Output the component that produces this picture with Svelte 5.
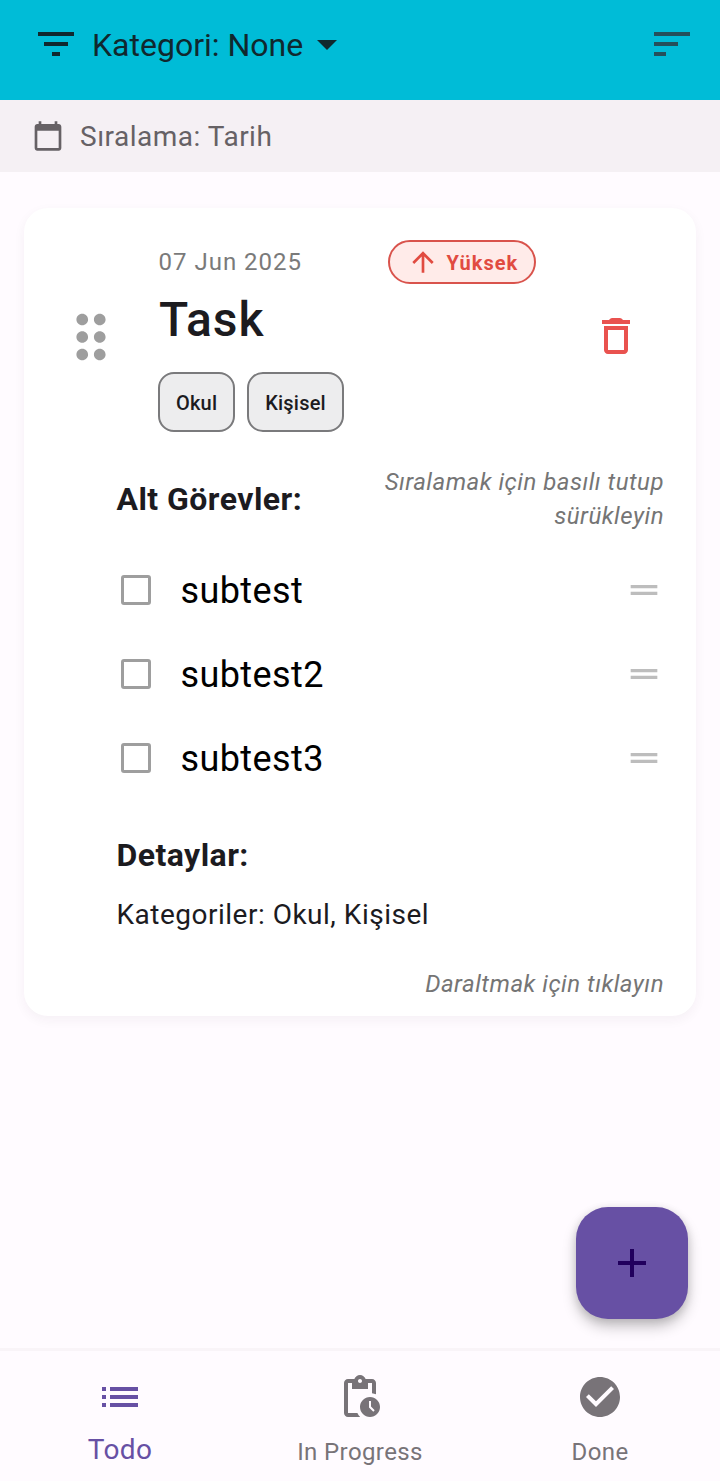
<script>
  const chips = ['Okul', 'Kişisel'];
  const subtasks = ['subtest', 'subtest2', 'subtest3'];
  const icons = {
    filter: 'M10 18h4v-2h-4v2zM3 6v2h18V6H3zm3 7h12v-2H6v2z',
    drop: 'M7 10l5 5 5-5z',
    sort: 'M3 18h6v-2H3v2zM3 6v2h18V6H3zm0 7h12v-2H3v2z',
    calendar: 'M20 3h-1V1h-2v2H7V1H5v2H4c-1.1 0-2 .9-2 2v16c0 1.1.9 2 2 2h16c1.1 0 2-.9 2-2V5c0-1.1-.9-2-2-2zm0 18H4V8h16v13z',
    drag: 'M11 18c0 1.1-.9 2-2 2s-2-.9-2-2 .9-2 2-2 2 .9 2 2zm-2-8c-1.1 0-2 .9-2 2s.9 2 2 2 2-.9 2-2-.9-2-2-2zm0-6c-1.1 0-2 .9-2 2s.9 2 2 2 2-.9 2-2-.9-2-2-2zm6 4c1.1 0 2-.9 2-2s-.9-2-2-2-2 .9-2 2 .9 2 2 2zm0 2c-1.1 0-2 .9-2 2s.9 2 2 2 2-.9 2-2-.9-2-2-2zm0 6c-1.1 0-2 .9-2 2s.9 2 2 2 2-.9 2-2-.9-2-2-2z',
    up: 'M4 12l1.41 1.41L11 7.83V20h2V7.83l5.58 5.59L20 12l-8-8-8 8z',
    trash: 'M6 19c0 1.1.9 2 2 2h8c1.1 0 2-.9 2-2V7H6V19zM8 9h8v10H8V9zM15.5 4l-.6-.6c-.3-.3-.6-.4-1-.4h-3.8c-.4 0-.7.1-1 .4L8.5 4H5v2h14V4z',
    handle: 'M20 9H4v2h16V9zM4 15h16v-2H4v2z',
    plus: 'M19 13h-6v6h-2v-6H5v-2h6V5h2v6h6v2z',
    list: 'M3 13h2v-2H3v2zm0 4h2v-2H3v2zm0-8h2V7H3v2zm4 4h14v-2H7v2zm0 4h14v-2H7v2zM7 7v2h14V7H7z',
    pending: 'M17 12c-2.76 0-5 2.24-5 5s2.24 5 5 5 5-2.24 5-5-2.24-5-5-5zm1.65 7.35L16.5 17.2V14h1v2.79l1.85 1.85-.7.71zM18 3h-3.18C14.4 1.84 13.3 1 12 1s-2.4.84-2.82 2H6c-1.1 0-2 .9-2 2v15c0 1.1.9 2 2 2h6.11c-.59-.57-1.07-1.25-1.42-2H6V5h2v3h8V5h2v5.08c.71.1 1.38.31 2 .6V5c0-1.1-.9-2-2-2zm-6 2c-.55 0-1-.45-1-1s.45-1 1-1 1 .45 1 1-.45 1-1 1z',
    done: 'M12 2C6.48 2 2 6.48 2 12s4.48 10 10 10 10-4.48 10-10S17.52 2 12 2zm-2 15l-5-5 1.41-1.41L10 14.17l7.59-7.59L19 8l-9 9z'
  };
  const tabs = [
    { label: 'Todo', icon: icons.list, active: true },
    { label: 'In Progress', icon: icons.pending, active: false },
    { label: 'Done', icon: icons.done, active: false }
  ];
</script>

{#snippet icon(d, size)}
  <svg class="icon" width={size} height={size} viewBox="0 0 24 24" fill="currentColor" aria-hidden="true"><path {d} /></svg>
{/snippet}

<div class="screen">
  <header>
    <div class="category">
      {@render icon(icons.filter, 48)}
      <span>Kategori: None</span>
      {@render icon(icons.drop, 48)}
    </div>
    <div class="sort">{@render icon(icons.sort, 48)}</div>
  </header>
  <div class="sortbar">
    {@render icon(icons.calendar, 32)}
    <span>Sıralama: Tarih</span>
  </div>

  <main>
    <article>
      <div class="top">
        <div class="grip">{@render icon(icons.drag, 70)}</div>
        <div class="summary">
          <div class="meta">
            <span class="date">07 Jun 2025</span>
            <span class="badge">{@render icon(icons.up, 32)}<span>Yüksek</span></span>
          </div>
          <h1>Task</h1>
          <div class="chips">
            {#each chips as chip}<span class="chip">{chip}</span>{/each}
          </div>
        </div>
        <div class="delete">{@render icon(icons.trash, 48)}</div>
      </div>
      <div class="details">
        <div class="subhead">
          <h2>Alt Görevler:</h2>
          <p class="hint">Sıralamak için basılı tutup sürükleyin</p>
        </div>
        <ul>
          {#each subtasks as task}
            <li>
              <span class="box"></span>
              <span class="name">{task}</span>
              <span class="handle">{@render icon(icons.handle, 40)}</span>
            </li>
          {/each}
        </ul>
        <h2 class="dh">Detaylar:</h2>
        <p class="cats">Kategoriler: Okul, Kişisel</p>
        <p class="hint collapse">Daraltmak için tıklayın</p>
      </div>
    </article>
    <button class="fab" aria-label="+">{@render icon(icons.plus, 48)}</button>
  </main>

  <nav>
    {#each tabs as tab}
      <div class="tab" class:active={tab.active}>
        {@render icon(tab.icon, 48)}
        <span>{tab.label}</span>
      </div>
    {/each}
  </nav>
</div>

<style>
  :global(body) { background: #fffbff; }
  .screen {
    width: 720px;
    height: 1481px;
    display: flex;
    flex-direction: column;
    overflow: hidden;
    background: #fffbff;
    color: #1c1b1f;
    font-family: Roboto, sans-serif;
  }
  h1, h2, p, ul { margin: 0; padding: 0; font-weight: 400; }
  .icon { display: block; flex: none; }
  header {
    box-sizing: border-box;
    height: 100px;
    padding: 20px 24px 32px 32px;
    display: flex;
    align-items: center;
    justify-content: space-between;
    background: #00bcd7;
  }
  .category { display: flex; align-items: center; height: 48px; color: #10282e; }
  .category span { margin-left: 12px; padding-top: 2px; font-size: 32px; line-height: 48px; white-space: nowrap; }
  .sort { color: #25505a; }
  .sortbar {
    height: 72px;
    padding: 0 32px;
    display: flex;
    align-items: center;
    gap: 16px;
    background: #f5f0f4;
    color: #666165;
    font-size: 28px;
    letter-spacing: 0.5px;
  }
  main { flex: 1; display: flex; flex-direction: column; padding: 36px 24px 0; }
  article {
    box-sizing: border-box;
    height: 808px;
    border-radius: 24px;
    background: #fff;
    box-shadow: 0 4px 12px rgba(60, 40, 60, 0.05);
  }
  .top { display: flex; height: 256px; }
  .grip { width: 134px; padding: 93.5px 0 0 32px; box-sizing: border-box; color: #9e9e9e; }
  .summary { width: 434px; padding-top: 32px; }
  .meta { display: flex; align-items: center; height: 44px; }
  .date { box-sizing: border-box; width: 230px; padding-left: 0.5px; font-size: 24px; letter-spacing: 1px; color: #7a7a7a; }
  .badge {
    box-sizing: border-box;
    width: 148px;
    height: 44px;
    padding-left: 16.5px;
    display: flex;
    align-items: center;
    gap: 8px;
    border: 2px solid #d9534c;
    border-radius: 22px;
    background: #ffebe9;
    color: #e14b41;
    font-size: 20px;
    font-weight: 700;
    letter-spacing: 1px;
  }
  .badge span { padding-top: 1px; }
  h1 { margin-top: 4px; padding-left: 1px; font-size: 48px; line-height: 64px; font-weight: 500; letter-spacing: 0.9px; }
  .chips { display: flex; gap: 12px; margin-top: 20px; }
  .chip {
    box-sizing: border-box;
    height: 60px;
    padding: 0 16px;
    border: 2px solid #7a7a7c;
    border-radius: 16px;
    background: #ededee;
    font-size: 20px;
    line-height: 58px;
    font-weight: 500;
    letter-spacing: 0.2px;
  }
  .delete { padding-top: 104px; color: #e9524f; }
  .details { padding: 0 32px 0 92px; }
  .subhead { display: flex; align-items: center; justify-content: space-between; height: 70px; }
  h2 { padding-left: 0.5px; font-size: 32px; line-height: 48px; font-weight: 700; letter-spacing: 0.45px; white-space: nowrap; }
  .hint { width: 290px; text-align: right; font-size: 24px; line-height: 34px; font-style: italic; letter-spacing: 0.5px; color: #757575; }
  ul { list-style: none; margin-top: 14px; }
  li { display: flex; align-items: center; height: 84px; }
  .box { box-sizing: border-box; width: 30px; height: 30px; margin: 0 29.5px 0 5px; border: 3px solid #9e9e9e; border-radius: 3px; }
  .name { flex: 1; padding-top: 2px; font-size: 36px; letter-spacing: 0.4px; color: #000; }
  .handle { color: #bdbdbd; }
  .dh { margin-top: 31px; }
  .cats { margin-top: 16px; padding-left: 0.5px; font-size: 28px; line-height: 40px; letter-spacing: 0.5px; white-space: nowrap; }
  .collapse { margin: 32px 0 0 auto; }
  .fab {
    width: 112px;
    height: 112px;
    margin: auto 8px 29px auto;
    padding: 0;
    display: grid;
    place-items: center;
    border: 0;
    border-radius: 32px;
    background: #6750a4;
    color: #21005d;
    box-shadow: 0 8px 14px rgba(0, 0, 0, 0.22), 0 2px 8px rgba(0, 0, 0, 0.12);
  }
  nav { box-sizing: border-box; height: 133px; display: flex; border-top: 3px solid #f9f4f8; }
  .tab { flex: 1; padding-top: 22px; display: flex; flex-direction: column; align-items: center; color: #787378; font-size: 24px; letter-spacing: 0.4px; }
  .tab span { margin-top: 13px; line-height: 36px; }
  .active { color: #6750a4; font-size: 28px; }
  .active span { margin-top: 11px; }
</style>
